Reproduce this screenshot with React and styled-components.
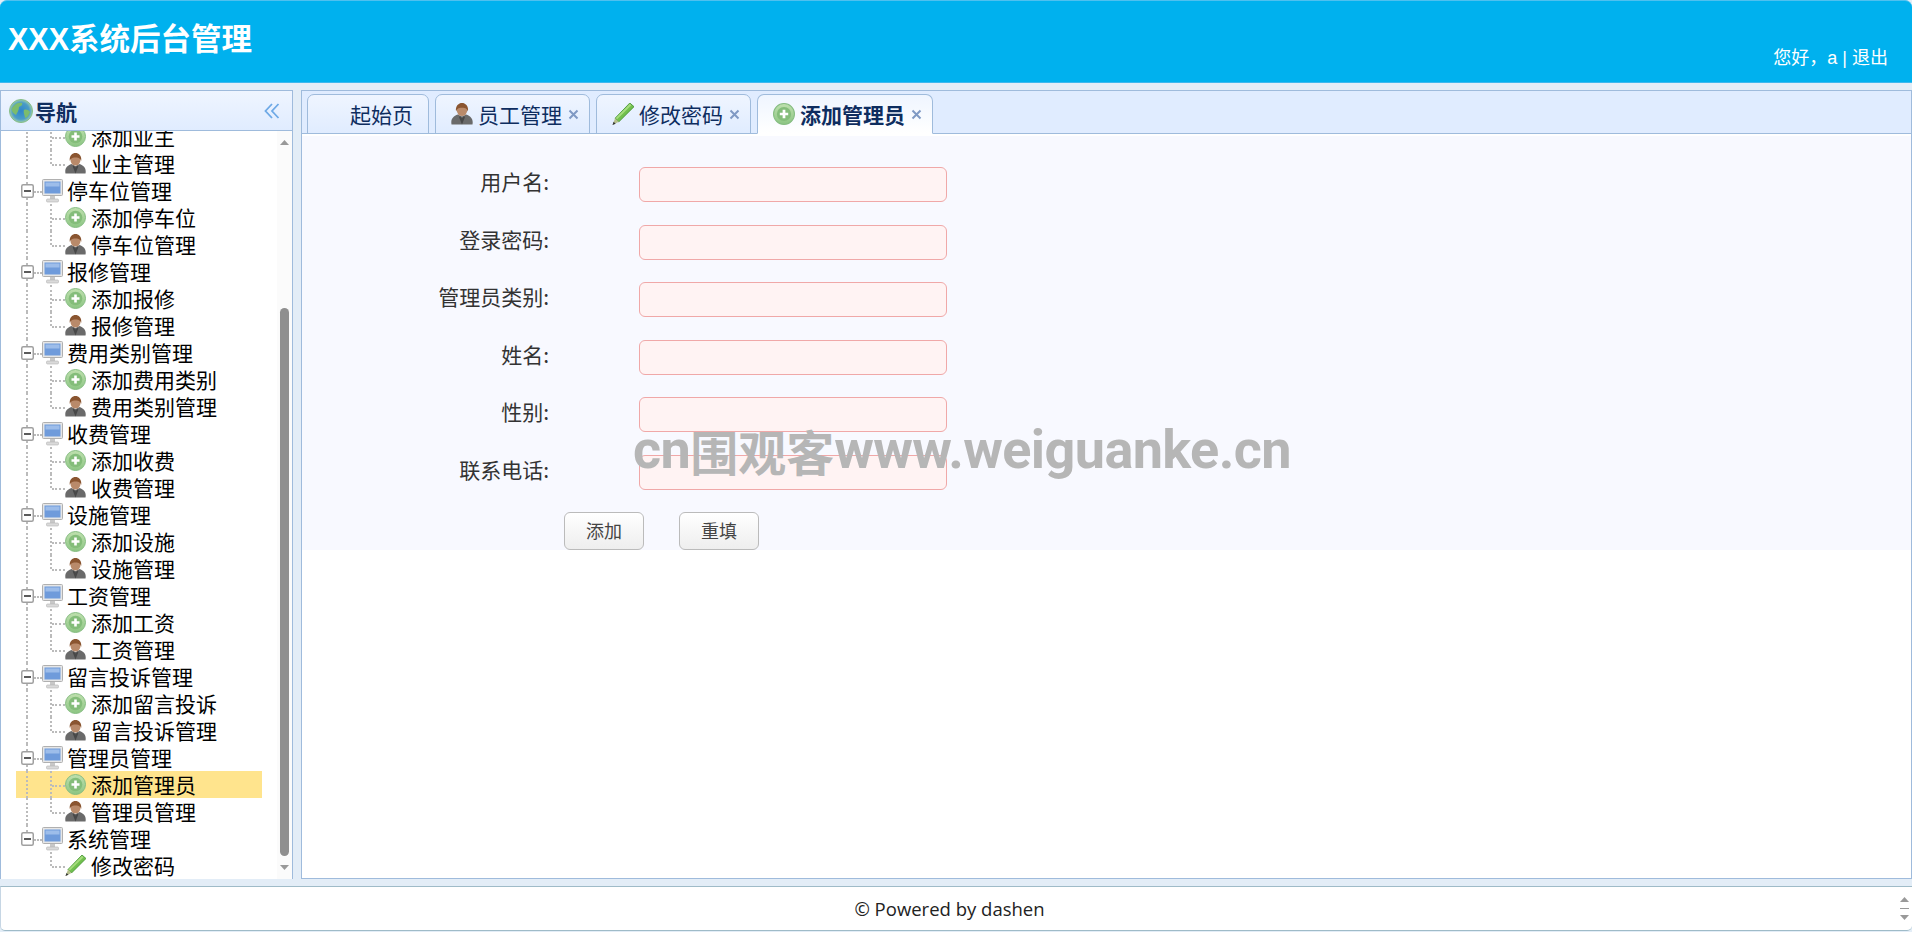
import { Fragment } from "react";
import styled, { createGlobalStyle, css } from "styled-components";

const Global = createGlobalStyle`
  html, body {
    margin: 0;
    height: 100%;
    overflow: hidden;
    background: #e3edf7;
    font-family: "Liberation Sans", "Noto Sans CJK SC", sans-serif;
  }
  * { box-sizing: border-box; }
`;

const cjk = `"Noto Sans CJK SC", "Liberation Sans", sans-serif`;
const latin = `"Liberation Sans", "Noto Sans CJK SC", sans-serif`;

const Page = styled.div`
  position: relative;
  display: flex;
  flex-direction: column;
  width: 1912px;
  height: 932px;
  background: #e3edf7;
`;
const Header = styled.header`
  display: flex;
  justify-content: space-between;
  height: 83px;
  padding: 0 24px 0 8px;
  background: #00b1ee;
  border-top: 1px solid #4fc0ef;
  border-bottom: 1px solid #3db8ee;
  border-radius: 7px 7px 0 0;
  color: #fff;
`;
const Title = styled.h1`
  margin: 19px 0 0;
  font: bold 30.5px/38px ${latin};
`;
const UserBar = styled.div`
  align-self: flex-end;
  margin-bottom: 11px;
  font: 18px/26px ${latin};
`;
const Middle = styled.div`
  display: flex;
  gap: 8px;
  height: 789px;
  margin-top: 7px;
`;
const West = styled.aside`
  display: flex;
  flex-direction: column;
  width: 293px;
  flex: none;
  border: 1px solid #9fbbdc;
  border-bottom: 0;
  background: #fff;
`;
const WestTitle = styled.div`
  display: flex;
  align-items: center;
  height: 40px;
  padding: 0 12px 0 8px;
  background: linear-gradient(#eff5ff, #e0ecff);
  border-bottom: 1px solid #9fbbdc;
  color: #0e2d5f;
  font: bold 21px/38px ${cjk};
  svg:first-child { margin-right: 2px; }
  svg:last-child { margin-left: auto; }
`;
const TreeBody = styled.div`
  flex: 1;
  display: flex;
  overflow: hidden;
`;
const Tree = styled.ul`
  width: 246px;
  margin: -8px 0 0 15px;
  padding: 0;
  list-style: none;
  flex: none;
`;
const Row = styled.li`
  display: flex;
  align-items: center;
  height: 27px;
  font: 21px/27px ${cjk};
  color: #000;
  ${(p) => p.$selected && css`background: #ffe48d;`}
`;
const Label = styled.span`
  margin-left: ${(p) => (p.$branch ? "4px" : "5px")};
  white-space: nowrap;
`;
const Guide = styled.span`
  position: relative;
  flex: none;
  width: 24px;
  height: 100%;
  ${(p) =>
    p.$on &&
    css`
      &::before {
        content: "";
        position: absolute;
        left: 10px;
        top: 0;
        bottom: 0;
        border-left: 2px dotted #bbb;
      }
    `}
`;
const Elbow = styled.span`
  position: relative;
  flex: none;
  width: 25px;
  height: 100%;
  &::before {
    content: "";
    position: absolute;
    left: 10px;
    top: 0;
    bottom: ${(p) => (p.$last ? "50%" : "0")};
    border-left: 2px dotted #bbb;
  }
  &::after {
    content: "";
    position: absolute;
    left: 12px;
    top: 50%;
    width: 13px;
    border-top: 2px dotted #bbb;
  }
`;
const Toggle = styled.span`
  position: relative;
  flex: none;
  display: flex;
  align-items: center;
  width: 26px;
  height: 100%;
  padding-left: 5px;
  &::before {
    content: "";
    position: absolute;
    left: 10px;
    top: 0;
    bottom: ${(p) => (p.$last ? "60%" : "0")};
    border-left: 2px dotted #bbb;
  }
  &::after {
    content: "";
    position: absolute;
    left: 18px;
    top: 50%;
    width: 8px;
    border-top: 2px dotted #bbb;
  }
  svg { position: relative; z-index: 1; }
`;
const Rail = styled.div`
  width: 15px;
  margin-left: auto;
  display: flex;
  flex-direction: column;
  align-items: center;
  padding-top: 9px;
  background: #fbfbfb;
`;
const Thumb = styled.div`
  width: 9px;
  height: 548px;
  margin: 163px 0 9px;
  border-radius: 5px;
  background: #8f8f8f;
`;
const Center = styled.main`
  flex: 1;
  display: flex;
  flex-direction: column;
  border: 1px solid #9fbbdc;
  background: #fff;
`;
const Tabs = styled.nav`
  display: flex;
  align-items: flex-end;
  gap: 6px;
  height: 43px;
  padding: 3px 0 0 5px;
  background: #e0ecff;
  border-bottom: 1px solid #9fbbdc;
`;
const Tab = styled.div`
  display: flex;
  align-items: center;
  height: 40px;
  margin-bottom: -1px;
  padding: ${(p) => (p.$plain ? "0 15px 0 42px" : "0 10px 0 15px")};
  border: 1px solid #9fbbdc;
  border-radius: 7px 7px 0 0;
  background: linear-gradient(#eff5ff, #e0ecff);
  color: #0e2d5f;
  font: 21px/38px ${cjk};
  ${(p) =>
    p.$active &&
    css`
      border-bottom-color: #fff;
      background: linear-gradient(#eff5ff, #fff);
      font-weight: bold;
    `}
  svg:first-child { margin-right: 5px; }
  svg:last-child:not(:first-child) { margin: 0 0 0 6px; }
`;
const Form = styled.form`
  display: grid;
  grid-template-columns: 247px 308px;
  column-gap: 90px;
  row-gap: 22.5px;
  align-items: center;
  align-content: start;
  height: 416px;
  padding-top: 31px;
  border-top: 2px solid #fff;
  background: #f8f9ff;
`;
const FieldLabel = styled.label`
  padding-bottom: 6px;
  text-align: right;
  color: #333;
  font: 21px/29px ${cjk};
`;
const Input = styled.input`
  display: block;
  width: 308px;
  height: 35px;
  padding: 0 6px;
  border: 1px solid #f0a8a8;
  border-radius: 6px;
  background: #fff3f3;
  outline: none;
`;
const Buttons = styled.div`
  grid-column: 1 / -1;
  display: flex;
  gap: 35px;
  margin-left: 262px;
`;
const Button = styled.button`
  width: 80px;
  height: 38px;
  padding: 0 0 2px;
  border: 1px solid #bbb;
  border-radius: 6px;
  background: linear-gradient(#fff, #eee);
  color: #444;
  font: 18px/34px ${cjk};
`;
const Footer = styled.footer`
  display: flex;
  align-items: center;
  height: 45px;
  margin-top: 7px;
  background: #fff;
  border: 1px solid #9fbbc8;
  border-left-color: #c6d6e4;
  border-right: 0;
  border-radius: 0 0 5px 5px;
`;
const Copy = styled.div`
  flex: 1;
  text-align: center;
  color: #222;
  font: 18.5px/30px "Open Sans", "Liberation Sans", sans-serif;
`;
const Scroller = styled.div`
  width: 12px;
  margin-right: 2px;
  display: flex;
  flex-direction: column;
  align-items: center;
  gap: 6px;
  svg { display: block; }
`;
const Dash = styled.div`
  width: 9px;
  height: 1px;
  background: #999;
`;
const Watermark = styled.div`
  position: absolute;
  left: 633px;
  top: 420px;
  display: flex;
  align-items: center;
  color: #b6b6b6;
  font: bold 48px/60px ${cjk};
  white-space: nowrap;
  pointer-events: none;
  span {
    font: bold 54px/60px Roboto, "Liberation Sans", sans-serif;
    letter-spacing: -0.6px;
  }
`;

const Globe = () => (
  <svg width="24" height="24" viewBox="0 0 24 24">
    <defs>
      <radialGradient id="globeFill" cx="50%" cy="50%" r="55%">
        <stop offset="0" stopColor="#2f86c9" />
        <stop offset="0.65" stopColor="#4a9cc6" />
        <stop offset="1" stopColor="#b6dca6" />
      </radialGradient>
    </defs>
    <circle cx="12" cy="12" r="11.5" fill="url(#globeFill)" stroke="#86bd86" />
    <path d="M3 9c3-5 7-6 10-5 1 2-1 3-3 4 0 3-2 6-3 8-3-2-5-4-4-7zM15 11c2-1 5 0 6 2-1 3-3 6-5 6 0-3-2-5-1-8z" fill="#7cbc6c" />
  </svg>
);
const Collapse = () => (
  <svg width="16" height="16" viewBox="0 0 16 16" fill="none" stroke="#6ea9e6" strokeWidth="1.8">
    <path d="M8 1 1.5 8 8 15M14.5 1 8 8l6.5 7" />
  </svg>
);
const Expander = () => (
  <svg width="13" height="14" viewBox="0 0 13 14">
    <rect x="0.75" y="0.75" width="11.5" height="12.5" rx="1.5" fill="#fff" stroke="#a0a0a0" strokeWidth="1.5" />
    <path d="M3 7h7" stroke="#333" strokeWidth="1.6" />
  </svg>
);
const Pc = () => (
  <svg width="21" height="24" viewBox="0 0 21 24">
    <rect x="0.5" y="0.5" width="20" height="16" rx="1" fill="#e6e6e6" stroke="#b0b0b0" />
    <rect x="2.5" y="2.5" width="16" height="12" fill="#6f9bdb" />
    <rect x="3.5" y="3.5" width="14" height="4" fill="#9dbdea" />
    <path d="M8 17h5v3H8z" fill="#c8c8c8" />
    <rect x="4.5" y="20" width="12" height="3" rx="1" fill="#dadada" stroke="#b4b4b4" strokeWidth="0.6" />
  </svg>
);
const Add = ({ size = 21 }) => (
  <svg width={size} height={size} viewBox="0 0 21 21">
    <defs>
      <linearGradient id="addFill" x1="0" y1="0" x2="0" y2="1">
        <stop offset="0" stopColor="#bfe0ae" />
        <stop offset="1" stopColor="#8cc583" />
      </linearGradient>
    </defs>
    <circle cx="10.5" cy="10.5" r="10" fill="url(#addFill)" stroke="#86bd82" />
    <circle cx="10.5" cy="10.5" r="6.8" fill="#84bd7a" />
    <path d="M10.5 6.500v8M6.500 10.5h8" stroke="#fff" strokeWidth="2.6" />
  </svg>
);
const User = ({ size = 21 }) => (
  <svg width={size} height={size} viewBox="0 0 21 21">
    <path d="M0.500 20.500c-1-5 1.500-8 6-9.500l4 2 4-2c4.500 1.500 7 4.500 6 9.500z" fill="#6a6a6a" />
    <path d="M8.500 12.500l2 2 2-2 .8 1-2.800 7-2.800-7z" fill="#484848" />
    <ellipse cx="10.500" cy="7" rx="5" ry="5.500" fill="#b98a6a" />
    <path d="M4.800 8C4 2.500 7.500 0 10.500 0s6.500 2.500 5.700 8c-.8-2-1.800-3.500-5.700-3.500S5.600 6 4.800 8z" fill="#8a5530" />
  </svg>
);
const Pencil = ({ size = 21 }) => (
  <svg width={size} height={size} viewBox="0 0 21 21">
    <path d="M17 0l4 3.500L6.500 18 3 14.500z" fill="#71c04e" stroke="#3f8f2f" strokeWidth="0.8" />
    <path d="M17 .8 3.600 14.300l1.300 1.300L18.500 2.200z" fill="#a5dc7d" />
    <path d="M3 14.500 6.500 18 .5 21z" fill="#b5bf8c" />
    <path d="M.5 21l1-3 2 1.800z" fill="#333" />
  </svg>
);
const Close = () => (
  <svg width="11" height="11" viewBox="0 0 11 11" stroke="#7f99c4" strokeWidth="2">
    <path d="M1.500 1.500l8 8M9.500 1.500l-8 8" />
  </svg>
);
const ArrowUp = ({ color = "#999" }) => (
  <svg width="9" height="5" viewBox="0 0 9 5"><path d="M4.500 0 9 5H0z" fill={color} /></svg>
);
const ArrowDown = ({ color = "#999" }) => (
  <svg width="9" height="5" viewBox="0 0 9 5"><path d="M0 0h9L4.500 5z" fill={color} /></svg>
);

const groups = [
  ["停车位管理", "添加停车位", "停车位管理"],
  ["报修管理", "添加报修", "报修管理"],
  ["费用类别管理", "添加费用类别", "费用类别管理"],
  ["收费管理", "添加收费", "收费管理"],
  ["设施管理", "添加设施", "设施管理"],
  ["工资管理", "添加工资", "工资管理"],
  ["留言投诉管理", "添加留言投诉", "留言投诉管理"],
  ["管理员管理", "添加管理员", "管理员管理"],
];
const fields = ["用户名:", "登录密码:", "管理员类别:", "姓名:", "性别:", "联系电话:"];

const Leaf = ({ icon, label, last, outer = true, selected }) => (
  <Row $selected={selected}>
    <Guide $on={outer} />
    <Elbow $last={last} />
    {icon}
    <Label>{label}</Label>
  </Row>
);

const Branch = ({ label, last }) => (
  <Row>
    <Toggle $last={last}><Expander /></Toggle>
    <Pc />
    <Label $branch>{label}</Label>
  </Row>
);

export default function App() {
  return (
    <Page>
      <Global />
      <Header>
        <Title>XXX系统后台管理</Title>
        <UserBar>您好，a | 退出</UserBar>
      </Header>
      <Middle>
        <West>
          <WestTitle>
            <Globe />
            导航
            <Collapse />
          </WestTitle>
          <TreeBody>
            <Tree>
              <Leaf icon={<Add />} label="添加业主" />
              <Leaf icon={<User />} label="业主管理" last />
              {groups.map(([name, add, manage]) => (
                <Fragment key={name}>
                  <Branch label={name} />
                  <Leaf icon={<Add />} label={add} selected={add === "添加管理员"} />
                  <Leaf icon={<User />} label={manage} last />
                </Fragment>
              ))}
              <Branch label="系统管理" last />
              <Leaf icon={<Pencil />} label="修改密码" last outer={false} />
            </Tree>
            <Rail>
              <ArrowUp />
              <Thumb />
              <ArrowDown />
            </Rail>
          </TreeBody>
        </West>
        <Center>
          <Tabs>
            <Tab $plain>起始页</Tab>
            <Tab><User size={22} />员工管理<Close /></Tab>
            <Tab><Pencil size={22} />修改密码<Close /></Tab>
            <Tab $active><Add size={22} />添加管理员<Close /></Tab>
          </Tabs>
          <Form>
            {fields.map((f) => (
              <Fragment key={f}>
                <FieldLabel>{f}</FieldLabel>
                <Input />
              </Fragment>
            ))}
            <Buttons>
              <Button type="button">添加</Button>
              <Button type="button">重填</Button>
            </Buttons>
          </Form>
        </Center>
      </Middle>
      <Footer>
        <Copy>© Powered by dashen</Copy>
        <Scroller>
          <ArrowUp />
          <Dash />
          <ArrowDown />
        </Scroller>
      </Footer>
      <Watermark>
        <span>cn</span>围观客<span>www.weiguanke.cn</span>
      </Watermark>
    </Page>
  );
}
